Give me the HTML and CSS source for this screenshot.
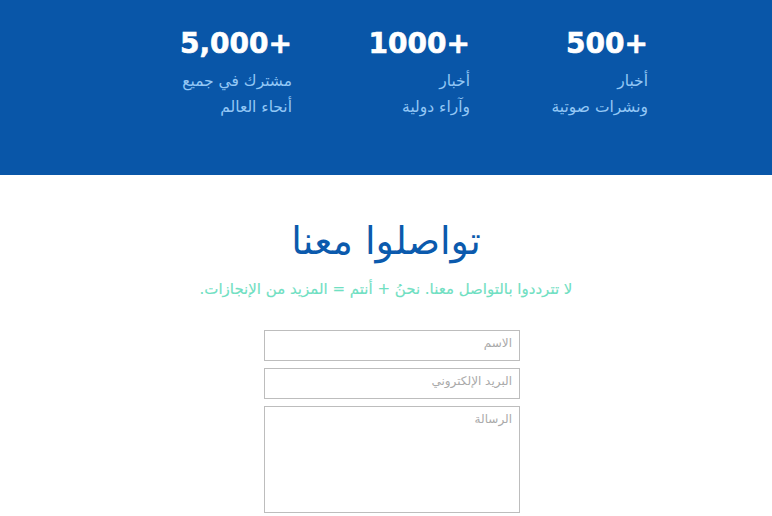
FILE: index.html
```html
<!DOCTYPE html>
<html lang="ar" dir="rtl">
<head>
<meta charset="utf-8">
<title>تواصلوا معنا</title>
<link rel="stylesheet" href="styles.css">
</head>
<body>
<section class="stats">
  <div class="stats-row">
    <div class="stat">
      <div class="stat-num">500+</div>
      <div class="stat-text">أخبار<br>ونشرات صوتية</div>
    </div>
    <div class="stat">
      <div class="stat-num">1000+</div>
      <div class="stat-text">أخبار<br>وآراء دولية</div>
    </div>
    <div class="stat">
      <div class="stat-num">5,000+</div>
      <div class="stat-text">مشترك في جميع<br>أنحاء العالم</div>
    </div>
  </div>
</section>
<section class="contact">
  <h1 class="contact-title">تواصلوا معنا</h1>
  <p class="contact-sub">لا تترددوا بالتواصل معنا. نحنُ + أنتم = المزيد من الإنجازات.</p>
  <form class="contact-form">
    <input class="field" type="text" placeholder="الاسم">
    <input class="field" type="email" placeholder="البريد الإلكتروني">
    <textarea class="field field-area" placeholder="الرسالة"></textarea>
  </form>
</section>
</body>
</html>
```
FILE: styles.css
```css
* { box-sizing: border-box; }
html, body { margin: 0; padding: 0; }
body {
  background: #fff;
  font-family: "DejaVu Sans", "Noto Sans", sans-serif;
}
.stats {
  background: #0956a8;
  height: 175px;
  padding-top: 28px;
}
.stats-row {
  display: flex;
  width: 534px;
  margin-right: 124px;
  margin-left: auto;
}
.stat {
  width: 178px;
  text-align: right;
}
.stat-num {
  direction: ltr;
  text-align: right;
  color: #fff;
  font-family: "DejaVu Sans", sans-serif;
  font-weight: 700;
  font-size: 28px;
  line-height: 32px;
  -webkit-text-stroke: 0.6px #fff;
}
.stat-text {
  margin-top: 8px;
  color: #93c7f5;
  font-size: 15.5px;
  line-height: 26px;
}
.contact {
  text-align: center;
  padding-top: 42px;
}
.contact-title {
  margin: 0;
  color: #0b5aad;
  font-weight: 400;
  font-size: 38px;
  line-height: 48px;
}
.contact-sub {
  margin: 12px 0 0;
  color: #6fe0c2;
  font-size: 15px;
  line-height: 24px;
  -webkit-text-stroke: 0.12px #6fe0c2;
}
.contact-form {
  width: 256px;
  margin: 29px 252px 0 0;
  display: flex;
  flex-direction: column;
  gap: 7px;
}
.field {
  display: block;
  width: 256px;
  height: 31px;
  border: 1px solid #bdbdbd;
  border-radius: 0;
  padding: 0 7px 6px;
  font-family: "DejaVu Sans", sans-serif;
  font-size: 12px;
  color: #555;
  background: #fff;
  margin: 0;
}
.field::placeholder { color: #aaa; }
.field-area {
  height: 107px;
  resize: none;
  padding-top: 5px;
}
```
